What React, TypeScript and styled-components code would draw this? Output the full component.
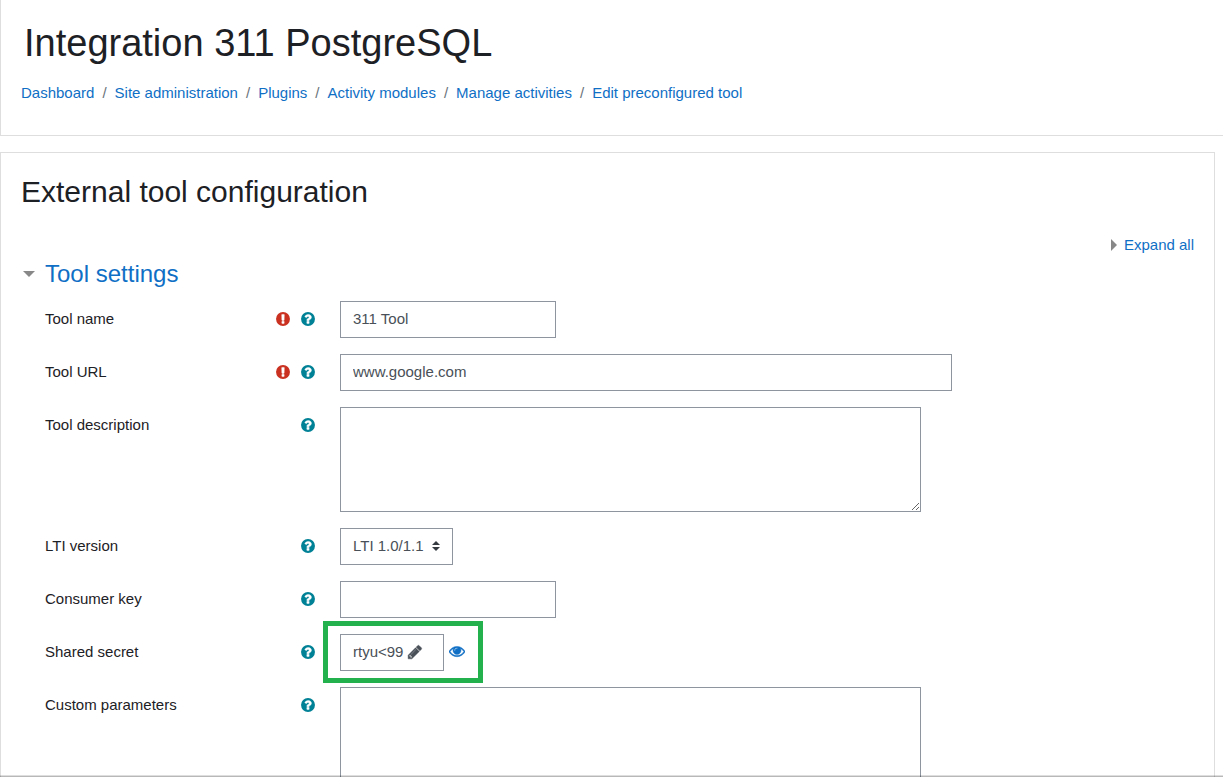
import React from "react";
import styled, { createGlobalStyle } from "styled-components";

const GlobalStyle = createGlobalStyle`
  *, *::before, *::after { box-sizing: border-box; }
  body {
    margin: 0;
    background: #fff;
    color: #1d2125;
    font-family: "Liberation Sans", Arial, sans-serif;
    font-size: 15px;
    line-height: 22px;
  }
  input, textarea, select, button { font: inherit; }
`;

const Page = styled.div`
  display: flex;
  flex-direction: column;
  gap: 16px;
  height: 100vh;
  overflow: hidden;
`;

const PageHeader = styled.header`
  flex: none;
  padding: 20px 20px 31px;
  border: solid #dedede;
  border-width: 0 0 1px 1px;
`;

const SiteTitle = styled.h1`
  margin: 0 0 16px;
  padding-left: 3px;
  font-size: 38px;
  font-weight: 400;
  line-height: 46px;
`;

const Breadcrumb = styled.ol`
  display: flex;
  flex-wrap: wrap;
  margin: 0;
  padding: 0;
  list-style: none;
`;

const Crumb = styled.li`
  & + &::before {
    content: "/";
    padding: 0 8px;
    color: #6a737b;
  }
`;

const TextLink = styled.a`
  color: #0f6fc5;
  text-decoration: none;
`;

const Card = styled.main`
  flex: none;
  margin-right: 8px;
  padding: 20px;
  border: 1px solid #dedede;
`;

const CardTitle = styled.h2`
  margin: 0 0 24px;
  font-size: 30px;
  font-weight: 400;
  line-height: 37px;
`;

const ExpandRow = styled.div`
  display: flex;
  justify-content: flex-end;
`;

const ExpandLink = styled(TextLink)`
  display: flex;
  align-items: center;
  gap: 7px;
`;

const SectionTitle = styled.h3`
  display: flex;
  margin: 3px 0 13px;
  font-size: 24px;
  font-weight: 400;
  line-height: 29px;
`;

const SectionLink = styled(TextLink)`
  display: flex;
  align-items: center;
  gap: 10px;
  padding-left: 2px;
`;

const FormRows = styled.form`
  display: flex;
  flex-direction: column;
  gap: 16px;
  padding-left: 24px;
`;

const FormRow = styled.div`
  display: grid;
  grid-template-columns: 271px minmax(0, 1fr);
  column-gap: 24px;
`;

const LabelCell = styled.div`
  display: flex;
  align-items: center;
  justify-content: space-between;
  height: 36px;
`;

const Marks = styled.span`
  display: flex;
  gap: 9px;
`;

const IconButton = styled.button`
  display: flex;
  padding: 0;
  border: 0;
  background: none;
  color: #008196;
  cursor: pointer;
`;

const RequiredMark = styled.span`
  display: flex;
  color: #ca3120;
`;

const TextInput = styled.input<{ $width: number }>`
  width: ${(p) => p.$width}px;
  max-width: 100%;
  height: 37px;
  padding: 6px 12px 8px;
  border: 1px solid #8f959e;
  border-radius: 0;
  background: #fff;
  color: #495057;
`;

const TextArea = styled.textarea`
  display: block;
  width: 581px;
  max-width: 100%;
  height: 105px;
  padding: 6px 12px;
  border: 1px solid #8f959e;
  border-radius: 0;
  color: #495057;
`;

const SelectBox = styled.div`
  position: relative;
  width: 113px;
  height: 37px;
`;

const Select = styled.select`
  width: 100%;
  height: 37px;
  padding: 6px 28px 8px 12px;
  border: 1px solid #8f959e;
  border-radius: 0;
  background: #fff;
  color: #495057;
  appearance: none;
`;

const SelectArrows = styled.svg`
  position: absolute;
  top: 13px;
  right: 13px;
  pointer-events: none;
`;

const SecretGroup = styled.div`
  position: relative;
  display: flex;
  gap: 5px;
  justify-self: start;

  &::after {
    content: "";
    position: absolute;
    inset: -13px -18px -12px -17px;
    border: 5px solid #22b14c;
    pointer-events: none;
  }
`;

const SecretField = styled.button`
  display: flex;
  align-items: center;
  gap: 4px;
  width: 104px;
  height: 37px;
  padding: 0 12px 2px;
  border: 1px solid #8f959e;
  background: #fff;
  color: #495057;
  cursor: pointer;
`;

const RevealButton = styled(IconButton)`
  align-self: center;
  padding-bottom: 3px;
  color: #0f6fc5;
`;

const BottomShade = styled.div`
  position: fixed;
  right: 0;
  bottom: 0;
  left: 0;
  height: 2px;
  border-top: 1px solid rgba(0, 0, 0, 0.13);
  background: rgba(0, 0, 0, 0.28);
  background-clip: padding-box;
`;

const glyphs = {
  required:
    "M1024 1375v-190q0-14-9-23.5t-22-9.5h-192q-13 0-23 10t-10 23v190q0 13 10 23t23 10h192q13 0 22-9.5t9-23.5zm-2-344l18-621q0-12-10-18-10-8-24-8h-220q-14 0-24 8-10 6-10 18l17 621q0 10 10 17.5t24 7.5h185q14 0 23.5-7.5t10.5-17.5z",
  help:
    "M1024 1376v-192q0-14-9-23t-23-9h-192q-14 0-23 9t-9 23v192q0 14 9 23t23 9h192q14 0 23-9t9-23zm256-672q0-88-55.5-163t-138.5-116-170-41q-243 0-371 213-15 24 8 42l132 100q7 6 19 6 16 0 25-12 53-68 86-92 34-24 86-24 48 0 85.5 26t37.5 59q0 38-20 61t-68 45q-63 28-115.5 86.5t-52.5 125.5v36q0 14 9 23t23 9h192q14 0 23-9t9-23q0-19 21.5-49.5t54.5-49.5q32-18 49-28.5t46-35 44.5-48 28-60.5 12.5-81z",
  pencil:
    "M491 1536l91-91-235-235-91 91v107h128v128h107zm523-928q0-22-22-22-10 0-17 7l-542 542q-7 7-7 17 0 22 22 22 10 0 17-7l542-542q7-7 7-17zm-54-192l416 416-832 832h-416v-416zm683 96q0 53-37 90l-166 166-416-416 166-165q36-38 90-38 53 0 91 38l235 234q37 39 37 91z",
  eye:
    "M1664 960q-152-236-381-353 61 104 61 225 0 185-131.5 316.5t-316.5 131.5-316.5-131.5-131.5-316.5q0-121 61-225-229 117-381 353 133 205 333.5 326.5t434.5 121.5 434.5-121.5 333.5-326.5zm-720-384q0-20-14-34t-34-14q-125 0-214.5 89.5t-89.5 214.5q0 20 14 34t34 14 34-14 14-34q0-86 61-147t147-61q20 0 34-14t14-34zm848 384q0 34-20 69-140 230-376.5 368.5t-499.5 138.5-499.5-139-376.5-368q-20-35-20-69t20-69q140-229 376.5-368t499.5-139 499.5 139 376.5 368q20 35 20 69z",
};

interface GlyphProps {
  name: keyof typeof glyphs;
  disc?: boolean;
}

function Glyph({ name, disc }: GlyphProps) {
  const ink = disc ? "#fff" : "currentColor";
  return (
    <svg width="16" height="16" viewBox="0 0 1792 1792" aria-hidden="true">
      {disc && <circle cx="896" cy="896" r="780" fill="currentColor" />}
      <path d={glyphs[name]} fill={ink} stroke={ink} strokeWidth="50" strokeLinejoin="round" />
    </svg>
  );
}

interface FieldProps {
  id: string;
  label: string;
  required?: boolean;
  children: React.ReactNode;
}

function Field({ id, label, required, children }: FieldProps) {
  return (
    <FormRow>
      <LabelCell>
        <label htmlFor={id}>{label}</label>
        <Marks>
          {required && (
            <RequiredMark title="Required">
              <Glyph name="required" disc />
            </RequiredMark>
          )}
          <IconButton type="button" aria-label={`Help with ${label}`}>
            <Glyph name="help" disc />
          </IconButton>
        </Marks>
      </LabelCell>
      {children}
    </FormRow>
  );
}

const crumbs = [
  "Dashboard",
  "Site administration",
  "Plugins",
  "Activity modules",
  "Manage activities",
  "Edit preconfigured tool",
];

export default function App() {
  return (
    <>
      <GlobalStyle />
      <Page>
        <PageHeader>
          <SiteTitle>Integration 311 PostgreSQL</SiteTitle>
          <nav aria-label="Breadcrumb">
            <Breadcrumb>
              {crumbs.map((crumb) => (
                <Crumb key={crumb}>
                  <TextLink href="#">{crumb}</TextLink>
                </Crumb>
              ))}
            </Breadcrumb>
          </nav>
        </PageHeader>
        <Card>
          <CardTitle>External tool configuration</CardTitle>
          <ExpandRow>
            <ExpandLink href="#">
              <svg width="6" height="12" viewBox="0 0 6 12" fill="#888" aria-hidden="true">
                <path d="M0 0l6 6-6 6z" />
              </svg>
              Expand all
            </ExpandLink>
          </ExpandRow>
          <SectionTitle>
            <SectionLink href="#">
              <svg width="12" height="6" viewBox="0 0 12 6" fill="#888" aria-hidden="true">
                <path d="M0 0h12L6 6z" />
              </svg>
              Tool settings
            </SectionLink>
          </SectionTitle>
          <FormRows>
            <Field id="name" label="Tool name" required>
              <TextInput id="name" $width={216} defaultValue="311 Tool" />
            </Field>
            <Field id="url" label="Tool URL" required>
              <TextInput id="url" $width={612} defaultValue="www.google.com" />
            </Field>
            <Field id="description" label="Tool description">
              <TextArea id="description" />
            </Field>
            <Field id="version" label="LTI version">
              <SelectBox>
                <Select id="version">
                  <option>LTI 1.0/1.1</option>
                </Select>
                <SelectArrows width="8" height="10" viewBox="0 0 4 5" fill="#343a40" aria-hidden="true">
                  <path d="M2 0L0 2h4zm0 5L0 3h4z" />
                </SelectArrows>
              </SelectBox>
            </Field>
            <Field id="key" label="Consumer key">
              <TextInput id="key" $width={216} />
            </Field>
            <Field id="secret" label="Shared secret">
              <SecretGroup>
                <SecretField id="secret" type="button">
                  rtyu&lt;99
                  <Glyph name="pencil" />
                </SecretField>
                <RevealButton type="button" aria-label="Reveal">
                  <Glyph name="eye" />
                </RevealButton>
              </SecretGroup>
            </Field>
            <Field id="custom" label="Custom parameters">
              <TextArea id="custom" />
            </Field>
          </FormRows>
        </Card>
      </Page>
      <BottomShade />
    </>
  );
}
